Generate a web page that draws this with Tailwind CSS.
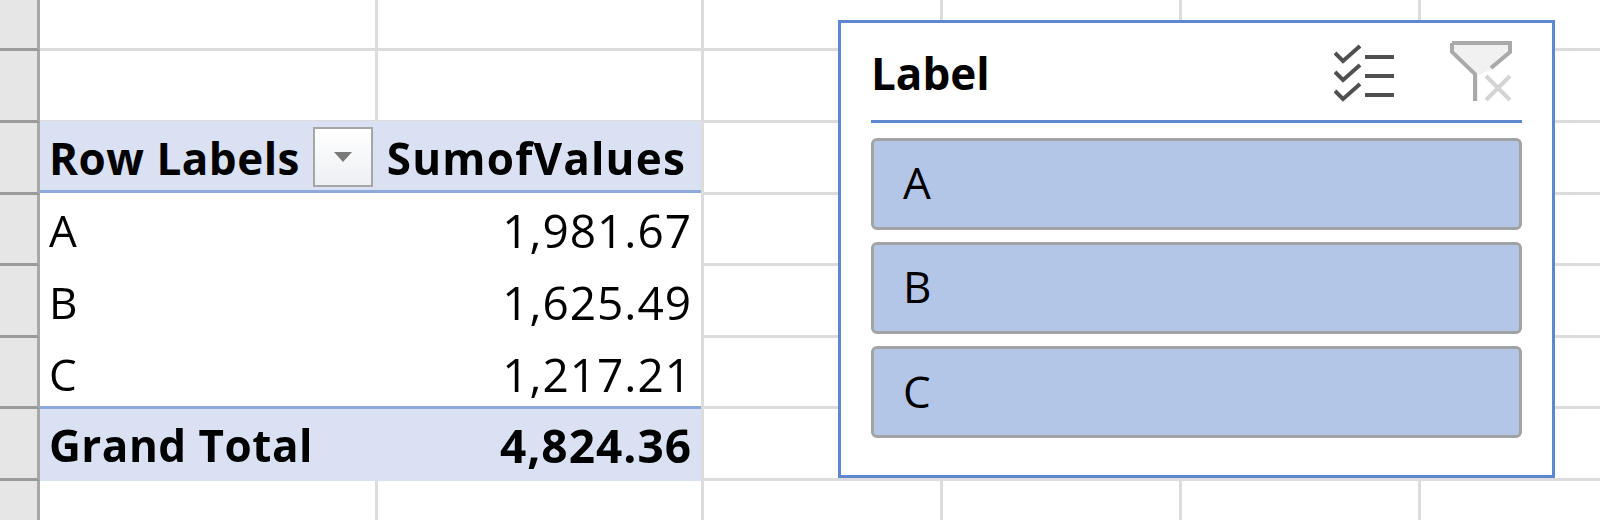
<!DOCTYPE html>
<html lang="en">
<head>
  <meta charset="UTF-8" />
  <title>Pivot table with slicer</title>
  <script src="https://cdn.jsdelivr.net/npm/@tailwindcss/browser@4"></script>
</head>
<body class="bg-white overflow-hidden">
  <div class="relative w-[1600px] h-[520px] overflow-hidden blur-[0.6px] font-['Open_Sans','Liberation_Sans',sans-serif] text-[44px] leading-none text-black">

    <!-- sheet grid -->
    <div id="sheet" class="grid grid-cols-[40px_338px_326px_239px_239px_239px_1fr] grid-rows-[51px_72px_72px_71px_72px_71px_72px_39px] h-[520px]">
      <!-- row 1 -->
      <div class="bg-[#e6e6e6] border-r-[3px] border-r-[#a8a8a8] border-b-[3px] border-b-[#9a9a9a]"></div>
      <div class="border-r-[3px] border-b-[3px] border-[#dcdcdc]"></div>
      <div class="border-r-[3px] border-b-[3px] border-[#dcdcdc]"></div>
      <div class="border-r-[3px] border-b-[3px] border-[#dcdcdc]"></div>
      <div class="border-r-[3px] border-b-[3px] border-[#dcdcdc]"></div>
      <div class="border-r-[3px] border-b-[3px] border-[#dcdcdc]"></div>
      <div class="border-b-[3px] border-[#dcdcdc]"></div>
      <!-- row 2 -->
      <div class="bg-[#e6e6e6] border-r-[3px] border-r-[#a8a8a8] border-b-[3px] border-b-[#9a9a9a]"></div>
      <div class="border-r-[3px] border-b-[3px] border-[#dcdcdc]"></div>
      <div class="border-r-[3px] border-b-[3px] border-[#dcdcdc]"></div>
      <div class="border-r-[3px] border-b-[3px] border-[#dcdcdc]"></div>
      <div class="border-r-[3px] border-b-[3px] border-[#dcdcdc]"></div>
      <div class="border-r-[3px] border-b-[3px] border-[#dcdcdc]"></div>
      <div class="border-b-[3px] border-[#dcdcdc]"></div>
      <!-- row 3 with pivot -->
      <div class="bg-[#e6e6e6] border-r-[3px] border-r-[#a8a8a8] border-b-[3px] border-b-[#9a9a9a]"></div>
      <div class="col-span-2 row-span-5 -mt-[2px] grid grid-rows-[72px_71px_72px_70px_75px] border-r-[3px] border-[#dcdcdc]">
        <div class="bg-[#d9e1f2] border-b-[3px] border-[#8ea9db] flex items-center font-bold pl-[9px] pr-[15px] pt-[5px]">
          <span class="w-[264px] shrink-0 tracking-[0.5px]">Row Labels</span>
          <div class="w-[60px] h-[60px] shrink-0 -mt-[3px] bg-gradient-to-b from-white to-[#eef0f4] border-2 border-[#a6a6a6] flex items-center justify-center">
            <svg width="20" height="12" viewBox="0 0 20 12"><path d="M1 1h18L10 11z" fill="#7a7a7a"/></svg>
          </div>
          <span class="ml-auto tracking-[1.2px]">SumofValues</span>
        </div>
        <div class="flex items-center justify-between pl-[9px] pr-[9px] pt-[2px]"><span>A</span><span class="text-[46px] tracking-[1px]">1,981.67</span></div>
        <div class="flex items-center justify-between pl-[9px] pr-[9px] pt-[4px]"><span>B</span><span class="text-[46px] tracking-[1px]">1,625.49</span></div>
        <div class="flex items-center justify-between pl-[9px] pr-[9px] pt-[6px]"><span>C</span><span class="text-[46px] tracking-[1px]">1,217.21</span></div>
        <div class="bg-[#d9e1f2] border-t-[3px] border-[#8ea9db] flex items-center justify-between font-bold pl-[9px] pr-[9px]"><span class="tracking-[0.5px]">Grand Total</span><span class="text-[46px] tracking-[1px]">4,824.36</span></div>
      </div>
      <div class="border-r-[3px] border-b-[3px] border-[#dcdcdc]"></div>
      <div class="border-r-[3px] border-b-[3px] border-[#dcdcdc]"></div>
      <div class="border-r-[3px] border-b-[3px] border-[#dcdcdc]"></div>
      <div class="border-b-[3px] border-[#dcdcdc]"></div>
      <!-- row 4 -->
      <div class="bg-[#e6e6e6] border-r-[3px] border-r-[#a8a8a8] border-b-[3px] border-b-[#9a9a9a]"></div>
      <div class="border-r-[3px] border-b-[3px] border-[#dcdcdc]"></div>
      <div class="border-r-[3px] border-b-[3px] border-[#dcdcdc]"></div>
      <div class="border-r-[3px] border-b-[3px] border-[#dcdcdc]"></div>
      <div class="border-b-[3px] border-[#dcdcdc]"></div>
      <!-- row 5 -->
      <div class="bg-[#e6e6e6] border-r-[3px] border-r-[#a8a8a8] border-b-[3px] border-b-[#9a9a9a]"></div>
      <div class="border-r-[3px] border-b-[3px] border-[#dcdcdc]"></div>
      <div class="border-r-[3px] border-b-[3px] border-[#dcdcdc]"></div>
      <div class="border-r-[3px] border-b-[3px] border-[#dcdcdc]"></div>
      <div class="border-b-[3px] border-[#dcdcdc]"></div>
      <!-- row 6 -->
      <div class="bg-[#e6e6e6] border-r-[3px] border-r-[#a8a8a8] border-b-[3px] border-b-[#9a9a9a]"></div>
      <div class="border-r-[3px] border-b-[3px] border-[#dcdcdc]"></div>
      <div class="border-r-[3px] border-b-[3px] border-[#dcdcdc]"></div>
      <div class="border-r-[3px] border-b-[3px] border-[#dcdcdc]"></div>
      <div class="border-b-[3px] border-[#dcdcdc]"></div>
      <!-- row 7 -->
      <div class="bg-[#e6e6e6] border-r-[3px] border-r-[#a8a8a8] border-b-[3px] border-b-[#9a9a9a]"></div>
      <div class="border-r-[3px] border-b-[3px] border-[#dcdcdc]"></div>
      <div class="border-r-[3px] border-b-[3px] border-[#dcdcdc]"></div>
      <div class="border-r-[3px] border-b-[3px] border-[#dcdcdc]"></div>
      <div class="border-b-[3px] border-[#dcdcdc]"></div>
      <!-- row 8 -->
      <div class="bg-[#e6e6e6] border-r-[3px] border-r-[#a8a8a8]"></div>
      <div class="border-r-[3px] border-[#dcdcdc]"></div>
      <div class="border-r-[3px] border-[#dcdcdc]"></div>
      <div class="border-r-[3px] border-[#dcdcdc]"></div>
      <div class="border-r-[3px] border-[#dcdcdc]"></div>
      <div class="border-r-[3px] border-[#dcdcdc]"></div>
      <div></div>
    </div>

    <!-- slicer floats over the sheet -->
    <div class="absolute left-[838px] top-[20px] w-[717px] h-[458px] bg-white border-[3px] border-[#5f87d0] pl-[30px] pr-[30px] flex flex-col">
      <div class="h-[100px] shrink-0 border-b-[3px] border-[#5f87d0] flex items-center justify-between font-bold pt-[3px]">
        <span>Label</span>
        <div class="flex items-center gap-[54px] pr-[10px] -mt-[3px]">
          <svg width="62" height="60" viewBox="0 0 62 60" fill="none" stroke="#505050" stroke-width="4">
            <path d="M1 11l8 8 17-15M1 30l8 8 17-15M1 49l8 8 17-15"/>
            <path d="M31 15h29M31 34h29M31 53h29"/>
          </svg>
          <svg width="62" height="62" viewBox="0 0 62 62" fill="none">
            <path d="M2 2h58v10L40 29l-12 5v26h-4V34L2 12z" fill="#f1f1f1"/>
            <path d="M2 2h58v9L41 27M2 2v9l23 22v27" stroke="#a9a9a9" stroke-width="4"/>
            <path d="M36 35l24 24M60 35L36 59" stroke="#d4d4d4" stroke-width="4"/>
          </svg>
        </div>
      </div>
      <div class="flex flex-col gap-[12px] pt-[15px]">
        <div class="h-[92px] rounded-[6px] border-[3px] border-[#a3a3a3] bg-[#b4c6e7] flex items-center pl-[29px] pb-[4px]">A</div>
        <div class="h-[92px] rounded-[6px] border-[3px] border-[#a3a3a3] bg-[#b4c6e7] flex items-center pl-[29px] pb-[5px]">B</div>
        <div class="h-[92px] rounded-[6px] border-[3px] border-[#a3a3a3] bg-[#b4c6e7] flex items-center pl-[29px] pb-[3px]">C</div>
      </div>
    </div>
  </div>
</body>
</html>
